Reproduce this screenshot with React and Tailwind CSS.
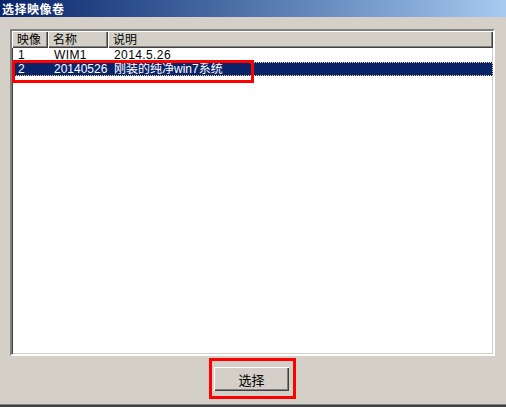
import React from "react";

const cjk = { fontFamily: '"Noto Sans CJK SC", "Liberation Sans", sans-serif' };
const mixed = { fontFamily: '"Liberation Sans", "Noto Sans CJK SC", sans-serif' };

function HeaderCell({ w, children, grow }) {
  return (
    <div
      className={`h-[17px] flex items-center pl-[5px] bg-[#d4d0c8] shadow-[inset_1px_1px_0_#ffffff,inset_-1px_-1px_0_#404040,inset_-2px_-2px_0_#808080] text-[12px] leading-none text-black ${grow ? "flex-1" : ""}`}
      style={w ? { width: w } : undefined}
    >
      {children}
    </div>
  );
}

export default function App() {
  return (
    <div className="w-[506px] h-[407px] bg-[#d4d0c8] flex flex-col overflow-hidden" style={mixed}>
      <div className="h-[17px] bg-gradient-to-r from-[#0a246a] to-[#a6caf0] flex items-center pl-[2px]">
        <span className="text-white font-bold text-[12px] leading-none tracking-[0.5px]" style={cjk}>
          选择映像卷
        </span>
      </div>
      <div className="ml-[10px] mt-[12px] w-[485px] h-[327px] relative border-2 border-t-[#808080] border-l-[#808080] border-b-white border-r-white bg-white shadow-[inset_1px_1px_0_#404040,inset_-1px_-1px_0_#d4d0c8]">
        <div className="flex">
          <HeaderCell w={36}>映像</HeaderCell>
          <HeaderCell w={60}>名称</HeaderCell>
          <HeaderCell grow>说明</HeaderCell>
        </div>
        <div className="flex h-[14px] items-center text-[12px] leading-none text-black">
          <div className="w-[36px] pl-[6px]">1</div>
          <div className="w-[60px] pl-[6px] tracking-[0.4px]">WIM1</div>
          <div className="pl-[6px] tracking-[0.4px]">2014.5.26</div>
        </div>
        <div className="flex h-[14px] items-center text-[12px] leading-none text-white bg-[#0a246a] outline-1 outline-dotted outline-[#f5db95] -outline-offset-1">
          <div className="w-[36px] pl-[6px]">2</div>
          <div className="w-[60px] pl-[6px]">20140526</div>
          <div className="pl-[6px]">刚装的纯净win7系统</div>
        </div>
        <div className="absolute left-0 top-[29px] w-[242px] h-[23px] border-[3px] border-[#ff0000] pointer-events-none" />
      </div>
      <div className="flex justify-center mt-[11px] pr-[3px]">
        <div className="relative">
          <button
            className="w-[75px] h-[24px] bg-[#d4d0c8] text-[13px] leading-none text-black flex items-center justify-center shadow-[inset_1px_1px_0_#ffffff,inset_-1px_-1px_0_#404040,inset_-2px_-2px_0_#808080]"
            style={cjk}
          >
            选择
          </button>
          <div className="absolute left-[-5px] top-[-9px] w-[87px] h-[41px] border-[3px] border-[#ff0000] pointer-events-none" />
        </div>
      </div>
      <div className="mt-auto h-[3px] border-t border-[#808080] bg-[#404040]" />
    </div>
  );
}
